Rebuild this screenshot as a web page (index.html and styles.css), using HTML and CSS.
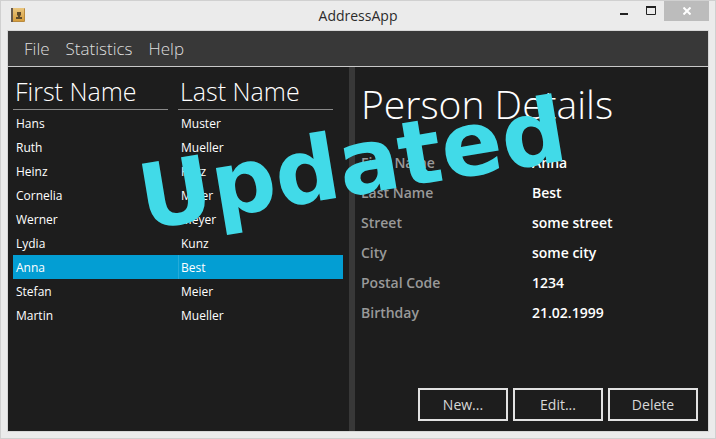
FILE: index.html
```html
<!DOCTYPE html>
<html lang="en">
<head>
<meta charset="utf-8">
<title>AddressApp</title>
<link rel="stylesheet" href="styles.css">
</head>
<body>
<div class="window">
  <header class="titlebar">
    <svg class="app-icon" width="16" height="16" viewBox="0 0 16 16" aria-hidden="true">
      <defs>
        <linearGradient id="cover" x1="0" y1="0" x2="0" y2="1">
          <stop offset="0" stop-color="#e9c67f"/>
          <stop offset="1" stop-color="#d69d3c"/>
        </linearGradient>
      </defs>
      <rect x="1" y="1" width="14" height="14" rx="1" fill="#b98a3e"/>
      <rect x="3" y="1" width="11" height="13" fill="url(#cover)"/>
      <rect x="1" y="1" width="2" height="14" fill="#66594d"/>
      <path d="M8 5h3v3l-1 1v1h2v2H6v-2h2V9L7 8V5z" fill="#5e4a2b"/>
    </svg>
    <h1 class="title">AddressApp</h1>
    <div class="controls">
      <button class="control" type="button" aria-label="Minimize">
        <svg width="10" height="10" viewBox="0 0 10 10"><path d="M1 8h8" stroke="#222" stroke-width="2"/></svg>
      </button>
      <button class="control" type="button" aria-label="Maximize">
        <svg width="10" height="10" viewBox="0 0 10 10"><path d="M0 1h10" stroke="#222" stroke-width="2"/><path d="M.5 1v7.500h9V1" stroke="#222" fill="none"/></svg>
      </button>
      <button class="control close" type="button" aria-label="Close">
        <svg width="8" height="8" viewBox="0 0 8 8"><path d="M.5.5l7 7M7.500.5l-7 7" stroke="#fff" stroke-width="2"/></svg>
      </button>
    </div>
  </header>
  <main class="app">
    <nav class="menubar">
      <button type="button">File</button>
      <button type="button">Statistics</button>
      <button type="button">Help</button>
    </nav>
    <div class="split">
      <section class="list">
        <table class="people">
          <thead>
            <tr><th scope="col"><span>First Name</span></th><th scope="col"><span>Last Name</span></th></tr>
          </thead>
          <tbody>
            <tr><td>Hans</td><td>Muster</td></tr>
            <tr><td>Ruth</td><td>Mueller</td></tr>
            <tr><td>Heinz</td><td>Kurz</td></tr>
            <tr><td>Cornelia</td><td>Meier</td></tr>
            <tr><td>Werner</td><td>Meyer</td></tr>
            <tr><td>Lydia</td><td>Kunz</td></tr>
            <tr class="selected"><td>Anna</td><td>Best</td></tr>
            <tr><td>Stefan</td><td>Meier</td></tr>
            <tr><td>Martin</td><td>Mueller</td></tr>
          </tbody>
        </table>
      </section>
      <section class="details">
        <h2>Person Details</h2>
        <dl>
          <dt>First Name</dt><dd>Anna</dd>
          <dt>Last Name</dt><dd>Best</dd>
          <dt>Street</dt><dd>some street</dd>
          <dt>City</dt><dd>some city</dd>
          <dt>Postal Code</dt><dd>1234</dd>
          <dt>Birthday</dt><dd>21.02.1999</dd>
        </dl>
        <div class="actions">
          <button type="button">New...</button>
          <button type="button">Edit...</button>
          <button type="button">Delete</button>
        </div>
      </section>
    </div>
  </main>
  <div class="stamp">Updated</div>
</div>
</body>
</html>
```

FILE: styles.css
```css
* {
  box-sizing: border-box;
}

body {
  margin: 0;
  font-family: "Open Sans", "Noto Sans", sans-serif;
}

button {
  margin: 0;
  padding: 0;
  border: 0;
  background: none;
  font: inherit;
  color: inherit;
}

.window {
  position: relative;
  display: flex;
  flex-direction: column;
  min-height: 100vh;
  padding: 0 6px 6px;
  border: 1px solid #d0d0d0;
  background: #ebebeb;
  overflow: hidden;
}

.titlebar {
  display: grid;
  grid-template-columns: 1fr auto 1fr;
  height: 29px;
}

.app-icon {
  margin: 6px 0 0 3px;
}

.title {
  margin: 0;
  font-size: 14px;
  font-weight: 400;
  line-height: 29px;
  color: #2b2b2b;
}

.controls {
  display: flex;
  justify-content: flex-end;
}

.control {
  display: flex;
  align-items: center;
  justify-content: center;
  width: 27px;
  height: 20px;
}

.close {
  width: 45px;
  background: #bcbcbc;
}

.app {
  flex: 1;
  display: flex;
  flex-direction: column;
  border: 1px solid #d6d6d6;
  background: #1d1d1d;
}

.menubar {
  display: flex;
  gap: 16px;
  height: 36px;
  padding: 0 16px;
  border-bottom: 1px solid #c8c8c8;
  background: #383838;
  color: #dedede;
  font-size: 17px;
  font-weight: 300;
}

.split {
  flex: 1;
  display: grid;
  grid-template-columns: 347fr 353fr;
}

.list {
  padding: 0 6px 0 5px;
  border-right: 6px solid #383838;
}

.people {
  width: 100%;
  border-collapse: collapse;
  table-layout: fixed;
  color: #fff;
  font-size: 12px;
}

.people th {
  height: 44px;
  padding: 0 10px 0 0;
  text-align: left;
  vertical-align: top;
  font-size: 25px;
  font-weight: 300;
  line-height: 42px;
}

.people th span {
  display: block;
  height: 43px;
  padding: 3px 2px 0;
  border-bottom: 1px solid #8a8a8a;
}

.people td {
  height: 24px;
  padding: 1px 3px 0;
  line-height: 23px;
}

.people .selected {
  background: #039ed3;
}

.selected td + td {
  box-shadow: inset 1px 0 #24abd9;
}

.details {
  display: flex;
  flex-direction: column;
  padding: 0 10px 10px 6px;
}

.details h2 {
  margin: 0;
  height: 81px;
  padding-top: 7px;
  color: #fff;
  font-size: 39px;
  font-weight: 300;
  line-height: 60px;
  white-space: nowrap;
}

.details dl {
  display: grid;
  grid-template-columns: 171px 1fr;
  margin: 0;
  font-size: 14px;
  font-weight: 600;
  line-height: 30px;
}

.details dt {
  color: #999;
}

.details dd {
  margin: 0;
  color: #fff;
}

.actions {
  display: flex;
  justify-content: flex-end;
  gap: 5px;
  margin-top: auto;
}

.actions button {
  width: 90px;
  height: 33px;
  border: 2px solid #e2e2e2;
  color: #d8d8d8;
  font-size: 14px;
}

.stamp {
  position: absolute;
  top: 163px;
  left: calc(50% - 6px);
  color: #41dae8;
  font-family: "DejaVu Sans", sans-serif;
  font-size: 90px;
  font-weight: 700;
  line-height: 1;
  transform: translate(-50%, -50%) rotate(-9.4deg);
  pointer-events: none;
}
```
